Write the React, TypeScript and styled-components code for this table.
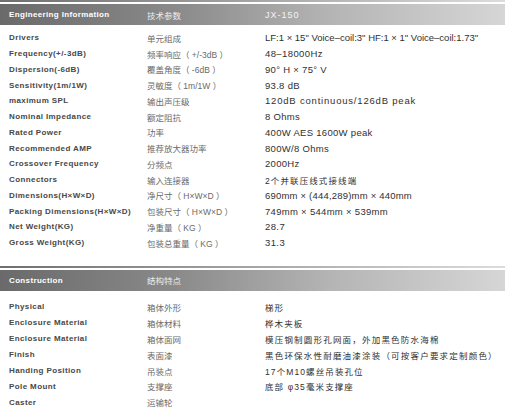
import React from "react";
import styled, { createGlobalStyle } from "styled-components";

const Global = createGlobalStyle`
  html, body { margin: 0; padding: 0; background: #ffffff; }
  body { font-family: "Liberation Sans", Arial, "Noto Sans CJK SC", sans-serif; }
`;

const Page = styled.div`
  width: 505px;
  display: flex;
  flex-direction: column;
`;

const Section = styled.section<{ $top: number }>`
  display: flex;
  flex-direction: column;
  margin-top: ${(p) => p.$top}px;
`;

const Rule = styled.div`
  height: 2px;
  background: linear-gradient(90deg, #6f6f6f 0%, #9a9a9a 40%, #dcdcdc 100%);
`;

const Header = styled.div`
  margin-top: 2px;
  height: 21px;
  display: grid;
  grid-template-columns: 138px 118px 1fr;
  align-items: center;
  padding-left: 9px;
  background: linear-gradient(90deg, #6a6a6a 0%, #8a8a8a 35%, #b4b4b4 65%, #d6d6d6 100%);
`;

const HeadEn = styled.span`
  color: #ffffff;
  font-weight: bold;
  font-size: 8px;
  letter-spacing: 0.35px;
`;

const HeadCn = styled.span`
  color: #eeeeee;
  font-family: "Noto Sans CJK SC", sans-serif;
  font-size: 8.5px;
`;

const HeadModel = styled.span`
  color: #f4f4f4;
  font-size: 9px;
  letter-spacing: 1px;
`;

const Rows = styled.div<{ $pad: number }>`
  display: flex;
  flex-direction: column;
  padding-top: ${(p) => p.$pad}px;
`;

const Row = styled.div<{ $h: number }>`
  height: ${(p) => p.$h}px;
  display: grid;
  grid-template-columns: 138px 118px 1fr;
  align-items: center;
  padding-left: 9px;
  white-space: nowrap;
`;

const Label = styled.span`
  color: #484848;
  font-weight: bold;
  font-size: 8px;
  letter-spacing: 0.4px;
`;

const Cn = styled.span`
  color: #6a6a6a;
  font-family: "Liberation Sans", "Noto Sans CJK SC", sans-serif;
  font-size: 8.5px;
`;

const Value = styled.span<{ $ls: number; $cjk?: boolean }>`
  color: #303030;
  font-family: "Liberation Sans", "Noto Sans CJK SC", sans-serif;
  font-size: ${(p) => (p.$cjk ? 8.5 : 9.5)}px;
  letter-spacing: ${(p) => p.$ls}px;
`;

type R = { en: string; cn: string; v: string; ls?: number; cjk?: boolean };

const eng: R[] = [
  { en: "Drivers", cn: "单元组成", v: "LF:1 × 15\" Voice–coil:3\"  HF:1 × 1\" Voice–coil:1.73\"", ls: 0 },
  { en: "Frequency(+/-3dB)", cn: "频率响应（ +/-3dB ）", v: "48–18000Hz", ls: 0.4 },
  { en: "Dispersion(-6dB)", cn: "覆盖角度（ -6dB ）", v: "90°  H × 75°  V", ls: 0.3 },
  { en: "Sensitivity(1m/1W)", cn: "灵敏度（ 1m/1W ）", v: "93.8 dB", ls: 0.3 },
  { en: "maximum SPL", cn: "输出声压级", v: "120dB continuous/126dB peak", ls: 0.8 },
  { en: "Nominal Impedance", cn: "额定阻抗", v: "8 Ohms", ls: 0.3 },
  { en: "Rated Power", cn: "功率", v: "400W AES 1600W peak", ls: 0.3 },
  { en: "Recommended  AMP", cn: "推荐放大器功率", v: "800W/8 Ohms", ls: 0.3 },
  { en: "Crossover Frequency", cn: "分频点", v: "2000Hz", ls: 0.3 },
  { en: "Connectors", cn: "输入连接器", v: "2个并联压线式接线端", ls: 1.1, cjk: true },
  { en: "Dimensions(H×W×D)", cn: "净尺寸（ H×W×D ）", v: "690mm × (444,289)mm × 440mm", ls: 0.2 },
  { en: "Packing Dimensions(H×W×D)", cn: "包装尺寸（ H×W×D ）", v: "749mm × 544mm × 539mm", ls: 0.3 },
  { en: "Net Weight(KG)", cn: "净重量（ KG ）", v: "28.7", ls: 0.4 },
  { en: "Gross Weight(KG)", cn: "包装总重量（ KG ）", v: "31.3", ls: 0.4 },
];

const cons: R[] = [
  { en: "Physical", cn: "箱体外形", v: "梯形", ls: 1.1, cjk: true },
  { en: "Enclosure Material", cn: "箱体材料", v: "桦木夹板", ls: 1.1, cjk: true },
  { en: "Enclosure Material", cn: "箱体面网", v: "模压钢制圆形孔网面，外加黑色防水海棉", ls: 1.2, cjk: true },
  { en: "Finish", cn: "表面漆", v: "黑色环保水性耐磨油漆涂装（可按客户要求定制颜色）", ls: 1.2, cjk: true },
  { en: "Handing Position", cn: "吊装点", v: "17个M10螺丝吊装孔位", ls: 1.1, cjk: true },
  { en: "Pole Mount", cn: "支撑座", v: "底部 φ35毫米支撑座", ls: 1.1, cjk: true },
  { en: "Caster", cn: "运输轮", v: "" },
];

export default function App() {
  return (
    <Page>
      <Global />
      <Section $top={0}>
        <Rule />
        <Header>
          <HeadEn>Engineering Information</HeadEn>
          <HeadCn>技术参数</HeadCn>
          <HeadModel>JX-150</HeadModel>
        </Header>
        <Rows $pad={5}>
          {eng.map((r, i) => (
            <Row key={i} $h={15.75}>
              <Label>{r.en}</Label>
              <Cn>{r.cn}</Cn>
              <Value $ls={r.ls ?? 0} $cjk={r.cjk}>{r.v}</Value>
            </Row>
          ))}
        </Rows>
      </Section>
      <Section $top={15}>
        <Rule />
        <Header>
          <HeadEn>Construction</HeadEn>
          <HeadCn>结构特点</HeadCn>
          <HeadModel />
        </Header>
        <Rows $pad={8.5}>
          {cons.map((r, i) => (
            <Row key={i} $h={15.9}>
              <Label>{r.en}</Label>
              <Cn>{r.cn}</Cn>
              <Value $ls={r.ls ?? 0} $cjk={r.cjk}>{r.v}</Value>
            </Row>
          ))}
        </Rows>
      </Section>
    </Page>
  );
}
